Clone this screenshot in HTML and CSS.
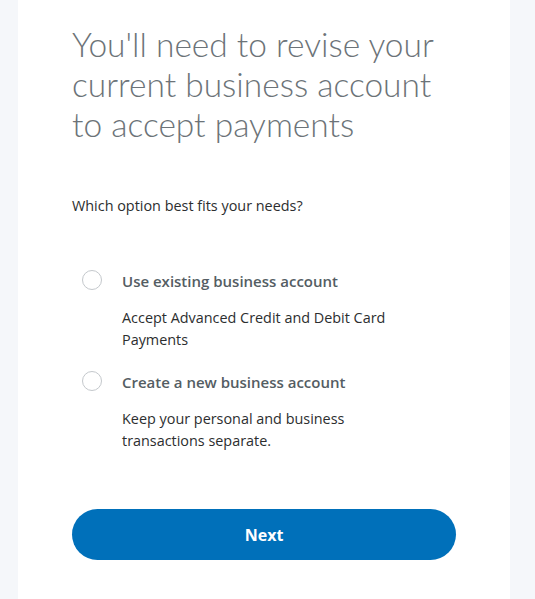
FILE: index.html
```html
<!DOCTYPE html>
<html lang="en">
<head>
<meta charset="utf-8">
<title>Revise account</title>
<link rel="stylesheet" href="styles.css">
</head>
<body>
<main class="card">
  <h1 class="title">You'll need to revise your current business account to accept payments</h1>
  <p class="question">Which option best fits your needs?</p>
  <div class="options">
    <label class="option">
      <span class="radio"></span>
      <span class="option-text">
        <span class="option-label">Use existing business account</span>
        <span class="option-desc">Accept Advanced Credit and Debit Card Payments</span>
      </span>
    </label>
    <label class="option">
      <span class="radio"></span>
      <span class="option-text">
        <span class="option-label">Create a new business account</span>
        <span class="option-desc">Keep your personal and business transactions separate.</span>
      </span>
    </label>
  </div>
  <button class="next" type="button">Next</button>
</main>
</body>
</html>
```
FILE: styles.css
```css
html, body {
  margin: 0;
  padding: 0;
  height: 100%;
}
body {
  background: #f5f7fa;
  font-family: "Open Sans", "Noto Sans", sans-serif;
  overflow: hidden;
}
.card {
  margin-left: 18px;
  width: 438px;
  min-height: 100%;
  background: #ffffff;
  padding: 24px 0 0 54px;
  box-sizing: content-box;
}
.title {
  margin: 0;
  font-family: "Lato", "Open Sans", sans-serif;
  font-size: 33.5px;
  line-height: 40px;
  font-weight: 300;
  color: #6c7378;
  width: 384px;
}
.question {
  margin: 51px 0 0;
  font-size: 14.4px;
  line-height: 22px;
  color: #2c2e2f;
}
.options {
  margin-top: 53px;
  display: flex;
  flex-direction: column;
  gap: 20px;
}
.option {
  display: flex;
  align-items: flex-start;
  gap: 20px;
  padding-left: 10px;
}
.radio {
  width: 18px;
  height: 18px;
  border: 1px solid #c4c8cc;
  border-radius: 50%;
  flex: none;
}
.option-text {
  display: flex;
  flex-direction: column;
  width: 300px;
}
.option-label {
  font-size: 15px;
  line-height: 22px;
  font-weight: 600;
  color: #545d63;
  margin-bottom: 15px;
}
.option-desc {
  font-size: 14.4px;
  line-height: 22px;
  color: #2c2e2f;
}
.next {
  display: block;
  margin-top: 57px;
  width: 384px;
  height: 51px;
  border: none;
  border-radius: 26px;
  background: #0070ba;
  color: #ffffff;
  font-family: inherit;
  font-size: 16px;
  font-weight: 700;
  cursor: pointer;
}
```
